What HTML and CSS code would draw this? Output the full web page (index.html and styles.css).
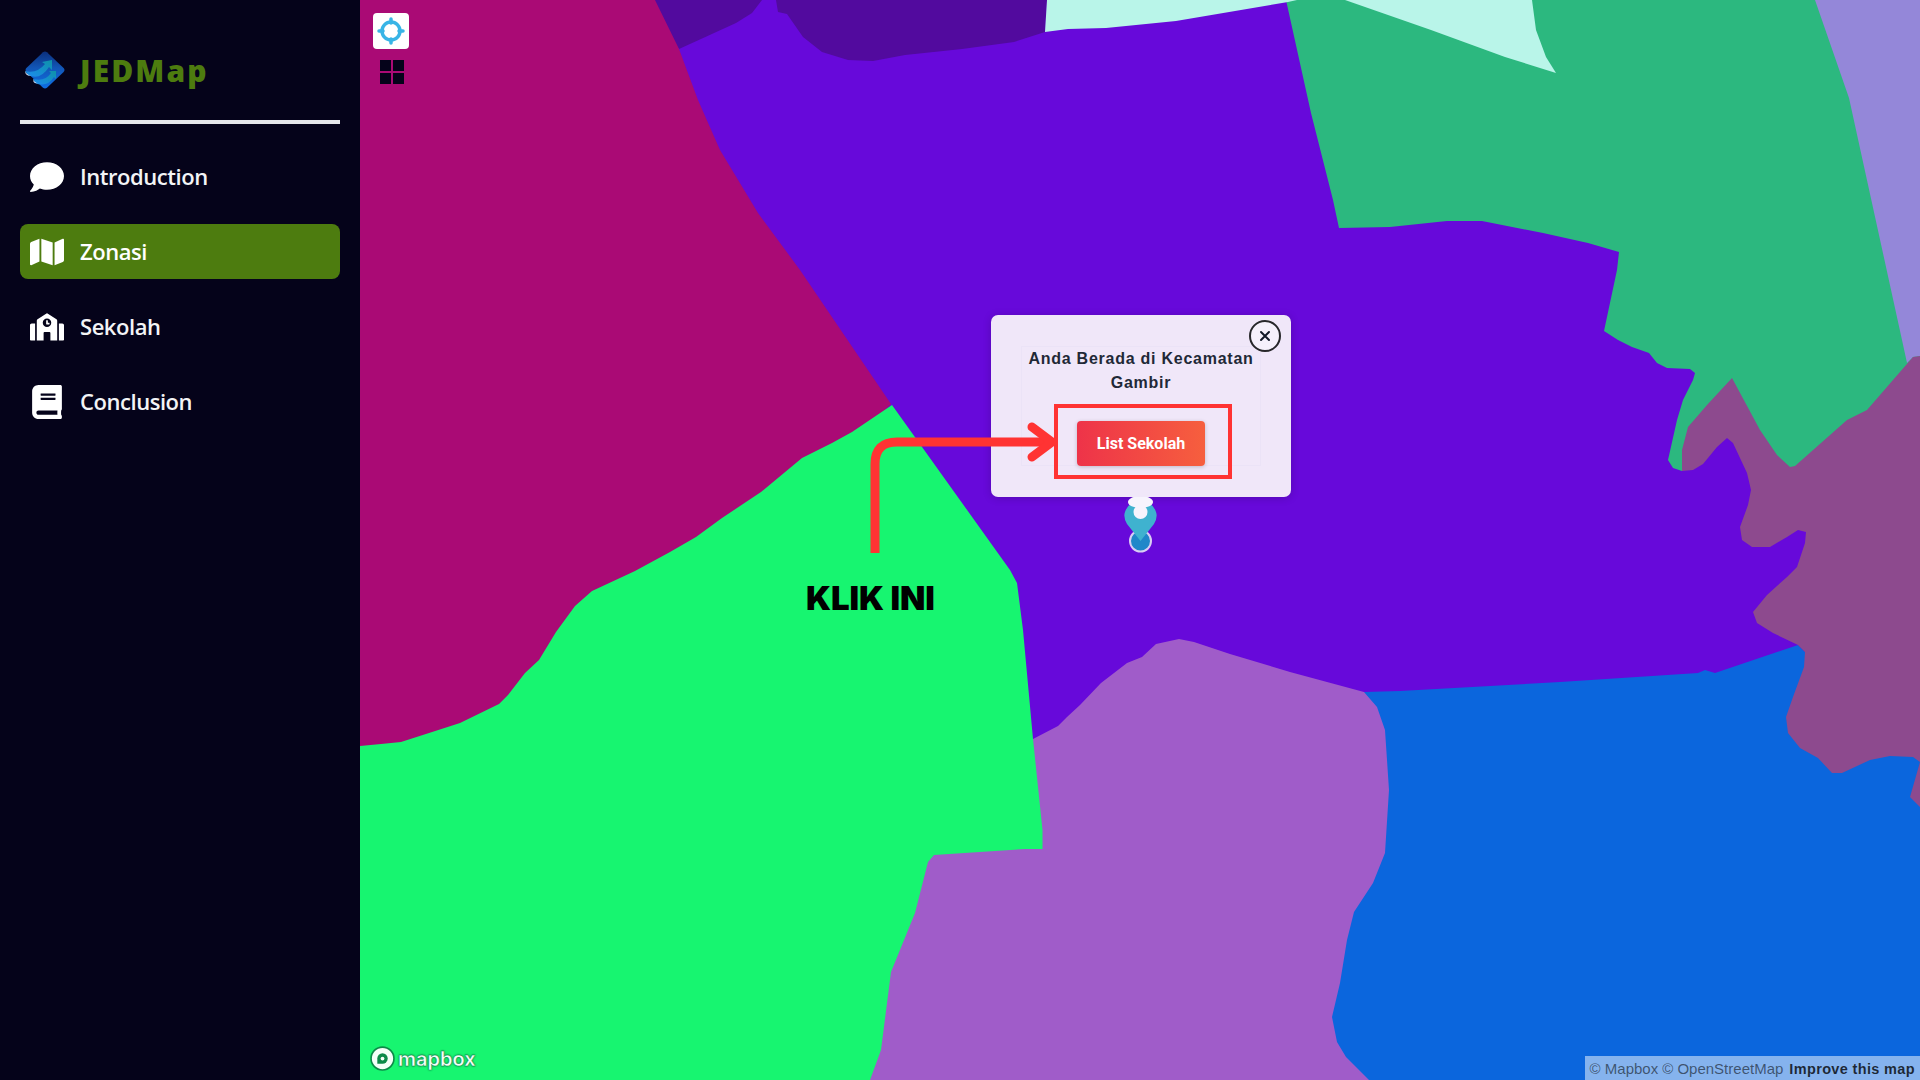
FILE: index.html
```html
<!DOCTYPE html>
<html lang="id">
<head>
<meta charset="utf-8">
<title>JEDMap</title>
<link rel="stylesheet" href="styles.css">
</head>
<body>
<aside class="sidebar">
  <div class="brand">
    <svg class="brand-logo" viewBox="0 0 40 38">
      <defs>
        <linearGradient id="lg" x1="0" y1="0" x2="0" y2="1">
          <stop offset="0" stop-color="#0b2f7c"/><stop offset=".45" stop-color="#1257b8"/><stop offset="1" stop-color="#0f6fe4"/>
        </linearGradient>
        <linearGradient id="ar" x1="0" y1="1" x2="1" y2="0">
          <stop offset="0" stop-color="#1d8bf0"/><stop offset="1" stop-color="#0e93a8"/>
        </linearGradient>
      </defs>
      <path d="M18 1.2 Q20 -.4 22 1.2 L38.6 17 Q40.4 19 38.6 21 L22 36.8 Q20 38.4 18 36.8 L1.4 21 Q-.4 19 1.4 17Z" fill="url(#lg)"/>
      <path d="M0 20 Q12 23 20 13 L17 11 L27 9 L27 19 L24 16 Q15 30 3 24Z" fill="url(#ar)"/>
      <path d="M8 28 Q20 31 26 22 L24 20 L31 20 L31 28 L29 26 Q22 37 10 32Z" fill="url(#ar)"/>
      <path d="M0 20 Q1 23 6 25 L3 24.5 Q0 23 0 20Z M8 28 Q9 31 13 32.5 L10 32 Q8 31 8 28Z" fill="#dbe9fb"/>
    </svg>
    <span class="brand-name">JEDMap</span>
  </div>
  <hr class="rule">
  <nav class="nav">
    <a class="nav-item">
      <svg class="nav-icon" viewBox="0 0 512 512"><path d="M256 32C114.6 32 0 125.1 0 240c0 49.6 21.4 95 57 130.7C44.5 421.1 2.7 466 2.2 466.5c-2.2 2.3-2.8 5.7-1.5 8.7S4.8 480 8 480c66.3 0 116-31.8 140.6-51.4 32.7 12.3 69 19.4 107.4 19.4 141.4 0 256-93.1 256-208S397.4 32 256 32z"/></svg>
      <span>Introduction</span>
    </a>
    <a class="nav-item active">
      <svg class="nav-icon" viewBox="0 0 576 512"><path d="M0 117.66v346.32c0 11.32 11.43 19.06 21.94 14.86L160 416V32L20.12 87.95A32.006 32.006 0 0 0 0 117.66zM192 416l192 64V96L192 32v384zM554.06 33.16L416 96v384l139.88-55.95A31.996 31.996 0 0 0 576 394.34V48.02c0-11.32-11.43-19.06-21.94-14.86z"/></svg>
      <span>Zonasi</span>
    </a>
    <a class="nav-item">
      <svg class="nav-icon" viewBox="0 0 640 512"><path d="M0 224v272c0 8.84 7.16 16 16 16h80V192H32c-17.67 0-32 14.33-32 32zm360-48h-24v-40c0-4.42-3.58-8-8-8h-16c-4.42 0-8 3.58-8 8v64c0 4.42 3.58 8 8 8h48c4.42 0 8-3.58 8-8v-16c0-4.42-3.58-8-8-8zm137.75-63.96l-160-106.67a32.02 32.02 0 0 0-35.5 0l-160 106.67A32.002 32.002 0 0 0 128 138.66V512h128V368c0-8.84 7.16-16 16-16h96c8.84 0 16 7.16 16 16v144h128V138.67c0-10.7-5.35-20.7-14.25-26.63zM320 256c-44.18 0-80-35.82-80-80s35.82-80 80-80 80 35.82 80 80-35.82 80-80 80zm288-64h-64v320h80c8.84 0 16-7.16 16-16V224c0-17.67-14.33-32-32-32z"/></svg>
      <span>Sekolah</span>
    </a>
    <a class="nav-item">
      <svg class="nav-icon" viewBox="0 0 448 512"><path d="M448 360V24c0-13.3-10.7-24-24-24H96C43 0 0 43 0 96v320c0 53 43 96 96 96h328c13.3 0 24-10.7 24-24v-16c0-7.5-3.5-14.3-8.9-18.7-4.2-15.4-4.2-59.3 0-74.7 5.4-4.3 8.9-11.1 8.9-18.6zM128 134c0-3.3 2.7-6 6-6h212c3.3 0 6 2.7 6 6v20c0 3.3-2.7 6-6 6H134c-3.3 0-6-2.7-6-6v-20zm0 64c0-3.3 2.7-6 6-6h212c3.3 0 6 2.7 6 6v20c0 3.3-2.7 6-6 6H134c-3.3 0-6-2.7-6-6v-20zm253.4 250H96c-17.7 0-32-14.3-32-32 0-17.6 14.4-32 32-32h285.4c-1.9 17.1-1.9 46.9 0 64z"/></svg>
      <span>Conclusion</span>
    </a>
  </nav>
</aside>

<main class="map">
  <svg class="map-canvas" viewBox="360 0 1560 1080" preserveAspectRatio="none">
    <rect class="z-purple" x="360" y="0" width="1560" height="1080"/>
    <polygon class="z-dark" points="640,0 762,0 752,13 736,23 679,49"/>
    <polygon class="z-dark" points="776,0 778,12 787,14 803,37 822,52 848,60 873,61 905,55 962,49 1014,42 1045,32 1047,0"/>
    <polygon class="z-magenta" points="360,0 655,0 679,49 698,100 720,150 758,213 800,270 891,404 700,600 360,800"/>
    <polygon class="z-teal" points="1286,0 1920,0 1920,370 1790,480 1735,400 1690,455 1682,471 1673,468 1668,460 1677,420 1683,400 1693,380 1695,373 1690,369 1667,368 1657,363 1649,353 1632,347 1618,340 1604,331 1617,270 1619,252 1588,243 1543,233 1482,221 1447,221 1390,227 1339,228 1333,200 1311,113"/>
    <polygon class="z-mint" points="1047,0 1045,32 1068,29 1106,28 1176,21 1288,2 1297,0"/>
    <polygon class="z-mint" points="1345,0 1431,30 1505,57 1556,73 1546,57 1536,30 1532,0"/>
    <polygon class="z-lilac" points="1815,0 1920,0 1920,356 1913,357 1907,363 1902,340 1849,98"/>
    <polygon class="z-blue" points="1364,692 1400,691 1560,682 1698,673 1705,670 1715,673 1798,645 1805,652 1920,652 1920,1080 1300,1080 1300,760"/>
    <polygon class="z-mauve" points="1920,356 1913,357 1893,380 1867,410 1847,420 1795,466 1790,467 1777,455 1760,430 1732,378 1707,405 1688,427 1682,450 1682,471 1693,470 1703,464 1717,447 1727,438 1733,443 1747,473 1751,490 1748,505 1740,527 1742,540 1752,547 1770,547 1787,537 1798,530 1806,532 1805,543 1797,567 1787,577 1767,595 1753,612 1757,623 1773,633 1798,645 1805,652 1804,667 1793,697 1786,717 1788,733 1800,748 1818,758 1832,773 1842,773 1870,760 1890,756 1913,757 1920,762 1910,797 1920,807"/>
    <polygon class="z-violet" points="1033,739 1058,726 1067,717 1080,705 1101,683 1127,663 1142,657 1156,644 1179,639 1194,642 1230,654 1290,672 1364,692 1377,707 1385,730 1389,790 1385,853 1373,883 1354,912 1347,940 1340,983 1332,1017 1337,1042 1346,1057 1369,1080 850,1080 900,850 1000,800"/>
    <polygon class="z-green" points="360,746 381,744 401,742 429,733 460,723 499,704 508,695 525,673 539,660 556,632 575,606 592,591 635,571 670,552 696,537 722,518 761,492 802,458 832,443 852,432 892,405 1010,570 1017,583 1023,630 1033,739 1042.5,830 1042.5,849 1025,849 934,855 928,862 915,913 891,972 881,1050 870,1080 360,1080"/>
  </svg>

  <div class="map-controls">
    <button class="geo-btn">
      <svg viewBox="0 0 36 36" class="geo-icon"><circle cx="18" cy="18" r="9" fill="none" stroke="#38b4e6" stroke-width="3.5"/><path d="M18 6v4M18 26v4M6 18h4M26 18h4" stroke="#38b4e6" stroke-width="3.5" stroke-linecap="round"/></svg>
    </button>
    <div class="grid-icon"><i></i><i></i><i></i><i></i></div>
  </div>

  <div class="popup">
    <button class="popup-close">
      <svg viewBox="0 0 12 12" class="close-x"><path d="M2 2l8 8M10 2l-8 8"/></svg>
    </button>
    <div class="popup-body">
      <p class="popup-text">Anda Berada di Kecamatan Gambir</p>
      <div class="popup-action"><button class="list-btn">List Sekolah</button></div>
    </div>
  </div>

  <svg class="pin" viewBox="0 0 40 56">
    <circle cx="20.5" cy="44" r="10.5" fill="#1f87c9" stroke="#d9cdf3" stroke-width="2"/>
    <path d="M20.5 44 L7 27 Q3 20 5 15 Q8 5 20.5 3 Q33 5 36 15 Q38 20 34 27 Z" fill="#3fb2cf"/>
    <ellipse cx="20.5" cy="5" rx="12.5" ry="6" fill="#f7f4fd"/>
    <circle cx="20.5" cy="15" r="7" fill="#f7f4fd"/>
  </svg>

  <svg class="arrow" viewBox="0 0 190 120">
    <path d="M5 117 V28 Q5 6 27 6 H178" fill="none" stroke="#ff3333" stroke-width="9"/>
    <path d="M162 -9 L182 6 L162 21" fill="none" stroke="#ff3333" stroke-width="9" stroke-linecap="round" stroke-linejoin="round"/>
  </svg>
  <div class="klik">KLIK INI</div>

  <div class="mapbox-logo">
    <svg viewBox="0 0 24 24" class="mapbox-mark"><circle cx="12" cy="12" r="11" fill="#f4fff8" stroke="#0c8a48" stroke-width="1.6"/><path d="M7 12a5 5 0 1 1 5 5H7Z" fill="#0c8a48"/><circle cx="12" cy="12" r="1.8" fill="#f4fff8"/></svg>
    <span class="mapbox-word">mapbox</span>
  </div>
  <div class="attribution">
    <span>© Mapbox</span> <span>© OpenStreetMap</span> <strong>Improve this map</strong>
  </div>
</main>
</body>
</html>
```

FILE: styles.css
```css
*, *::after { box-sizing: border-box; }
html, body { height: 100%; }
body {
  margin: 0;
  display: flex;
  overflow: hidden;
  background: #05031a;
  font-family: "Open Sans", "Noto Sans", sans-serif;
}

.sidebar {
  width: 360px;
  flex: none;
  height: 100%;
  padding: 0 20px;
  background: #05031a;
}
.brand {
  height: 120px;
  padding: 20px 4px 0 5px;
  display: flex;
  align-items: center;
  gap: 15px;
}
.brand-logo { width: 40px; height: 38px; flex: none; }
.brand-name {
  font-size: 30px;
  font-weight: 800;
  letter-spacing: 2.1px;
  color: #4d7c0f;
}
.rule {
  margin: 0 0 25px;
  height: 4px;
  border: 0;
  background: #e5e7eb;
}
.nav { display: flex; flex-direction: column; gap: 20px; }
.nav-item {
  height: 55px;
  padding: 0 10px 2px;
  display: flex;
  align-items: center;
  gap: 16px;
  border-radius: 8px;
  color: #f3f4f6;
  font-size: 22px;
  font-weight: 600;
  letter-spacing: -0.45px;
}
.nav-item.active { background: #4d7c0f; color: #fff; }
.nav-icon { width: 34px; height: 34px; fill: #fff; flex: none; margin-top: 2px; }

.map { position: relative; flex: 1; height: 100%; overflow: hidden; }
.map-canvas { position: absolute; inset: 0; width: 100%; height: 100%; display: block; }
.z-purple { fill: #6709da; }
.z-dark { fill: #520a9e; }
.z-mint { fill: #b9f5e9; }
.z-magenta { fill: #aa0a75; }
.z-teal { fill: #2cb87f; }
.z-lilac { fill: #9487d9; }
.z-mauve { fill: #8d4a8e; }
.z-blue { fill: #0b66dd; }
.z-violet { fill: #a05cc9; }
.z-green { fill: #17f570; }

.map-controls { position: absolute; left: 13px; top: 13px; display: flex; flex-direction: column; align-items: center; gap: 11px; }
.geo-btn { width: 36px; height: 36px; padding: 0; border: 0; border-radius: 4px; background: #fff; display: flex; }
.geo-icon { width: 36px; height: 36px; }
.grid-icon { display: grid; grid-template-columns: 11px 11px; gap: 2px; margin-left: 2px; }
.grid-icon i { height: 11px; background: #05031a; }

.popup {
  position: absolute;
  left: 631px;
  top: 315px;
  width: 300px;
  height: 182px;
  padding: 31px 30px 0;
  border-radius: 7px;
  background: #f0e7f9;
  box-shadow: 0 1px 8px rgba(0,0,0,.18);
}
.popup-close {
  position: absolute;
  right: 10px;
  top: 5px;
  width: 32px;
  height: 32px;
  padding: 0;
  border: 2px solid #27272a;
  border-radius: 50%;
  background: #f5f0fb;
  display: flex;
  align-items: center;
  justify-content: center;
}
.close-x { width: 12px; height: 12px; fill: none; stroke: #111827; stroke-width: 2; stroke-linecap: round; }
.popup-body { height: 120px; border: 1px solid rgba(180,190,225,.08); text-align: center; }
.popup-text {
  margin: 0;
  font-family: "Liberation Sans", Arial, sans-serif;
  font-size: 16px;
  font-weight: 700;
  line-height: 24px;
  letter-spacing: .75px;
  color: #1f2937;
}
.popup-action { display: flex; justify-content: center; margin-top: 26px; }
.list-btn {
  width: 128px;
  height: 45px;
  padding: 0;
  border: 0;
  border-radius: 4px;
  background: linear-gradient(90deg, #ee3349, #f65f3e);
  color: #fff;
  font-family: Roboto, sans-serif;
  font-size: 16px;
  font-weight: 700;
  box-shadow: 0 1px 4px rgba(0,0,0,.2);
}
.popup::after {
  content: "";
  position: absolute;
  left: 63px;
  top: 89px;
  width: 178px;
  height: 75px;
  border: 4px solid #ff3333;
}

.pin { position: absolute; left: 760px; top: 497px; width: 40px; height: 56px; }
.arrow { position: absolute; left: 510px; top: 436px; width: 190px; height: 120px; overflow: visible; }
.klik {
  position: absolute;
  left: 446px;
  top: 577px;
  font-family: Inter, sans-serif;
  font-size: 33px;
  font-weight: 900;
  letter-spacing: -0.1px;
  color: #000;
  line-height: 42px;
  white-space: nowrap;
}

.mapbox-logo { position: absolute; left: 10px; bottom: 9px; display: flex; align-items: center; gap: 3px; }
.mapbox-mark { width: 25px; height: 25px; }
.mapbox-word {
  font-family: Inter, sans-serif;
  font-size: 20px;
  font-weight: 600;
  color: #f4fff8;
  -webkit-text-stroke: .3px #0c8a48;
  text-shadow: 0 0 2px #0c8a48, 0 0 2px #0c8a48;
}
.attribution {
  position: absolute;
  right: 0;
  bottom: 0;
  height: 24px;
  padding: 1px 5px 0;
  display: flex;
  align-items: center;
  gap: 4px;
  background: rgba(255,255,255,.5);
  font-family: "Liberation Sans", Arial, sans-serif;
  font-size: 15px;
  color: rgba(0,0,0,.55);
  white-space: nowrap;
}
.attribution strong { margin-left: 2px; font-size: 14.5px; color: rgba(0,0,0,.78); letter-spacing: .35px; }
```
